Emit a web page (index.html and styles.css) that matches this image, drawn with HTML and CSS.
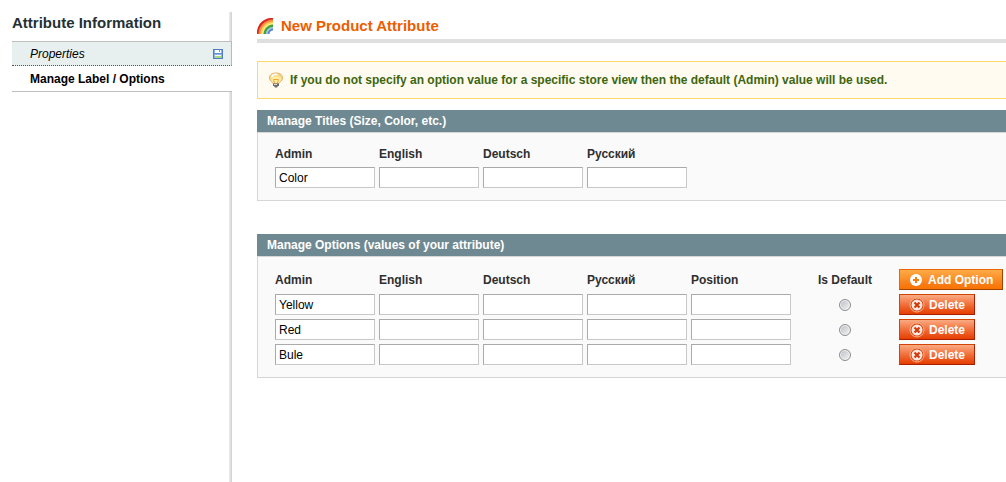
FILE: index.html
```html
<!DOCTYPE html>
<html lang="en">
<head>
<meta charset="utf-8">
<title>New Product Attribute</title>
<link rel="stylesheet" href="styles.css">
</head>
<body>
<div class="page">
  <aside class="sidebar">
    <h3 class="sidebar-title">Attribute Information</h3>
    <nav class="tabs">
      <a class="tab tab-changed" href="#properties">
        <span>Properties</span>
        <svg class="disk" viewBox="0 0 10 10" width="10" height="10" aria-hidden="true">
          <rect x="0.5" y="0.5" width="9" height="9" fill="#8fb4ec" stroke="#4f7cc8"/>
          <rect x="2" y="1" width="6" height="3" fill="#fff"/>
          <rect x="6" y="1" width="1" height="2" fill="#6b93d3"/>
          <rect x="1" y="4" width="8" height="1" fill="#5f8dd8"/>
          <rect x="2" y="6" width="6" height="1" fill="#f4faef"/>
          <rect x="2" y="7" width="6" height="2" fill="#a6de78"/>
        </svg>
      </a>
      <a class="tab tab-active" href="#labels">Manage Label / Options</a>
    </nav>
  </aside>

  <main class="content">
    <header class="content-header">
      <svg viewBox="0 0 16 16" width="16" height="16" aria-hidden="true">
        <path d="M0 16V13C1 6 6 1 13 0H16V16Z" fill="#d8271e"/>
        <path d="M1.500 16C1.500 8 8 1.500 16 1.500V16Z" fill="#f58a4a"/>
        <path d="M3.500 16C3.500 9 9 3.500 16 3.500V16Z" fill="#ffcf4a"/>
        <path d="M5 16C5 10 10 5 16 5V16Z" fill="#ffe98a"/>
        <path d="M6.500 16C6.500 11 11 6.500 16 6.500V16Z" fill="#3fa53a"/>
        <path d="M9 16C9 12 12 9 16 9V16Z" fill="#a9caf0"/>
        <path d="M10.500 16C10.500 13 13 10.500 16 10.500V16Z" fill="#5f84c8"/>
        <path d="M12.500 16C12.500 14 14 12.500 16 12.500V16Z" fill="#fff"/>
      </svg>
      <h1>New Product Attribute</h1>
    </header>

    <p class="notice">
      <svg viewBox="0 0 16 16" width="16" height="16" aria-hidden="true">
        <defs>
          <radialGradient id="glow" cx="50%" cy="65%" r="60%">
            <stop offset="0" stop-color="#fff3a0"/>
            <stop offset="0.550" stop-color="#ffe9a2"/>
            <stop offset="1" stop-color="#f9c86c"/>
          </radialGradient>
        </defs>
        <path d="M8 1C3.500 1 1.500 3.500 1.500 6C1.500 9 4.500 9.500 5 11.500H11C11.500 9.500 14.500 9 14.500 6C14.500 3.500 12.500 1 8 1Z" fill="url(#glow)" stroke="#e3b06a"/>
        <path d="M3.500 5C4.500 2.500 7 2 9.500 2.500" fill="none" stroke="#fff" stroke-width="1.500"/>
        <path d="M6.500 11L5.500 7.500H10.500L9.500 11" fill="none" stroke="#eda93c"/>
        <path d="M5 11.500H11V14H10L9 15.500H7L6 14H5Z" fill="#6c6c6c"/>
        <path d="M6 12.500H9" stroke="#ddd"/>
      </svg>
      <span>If you do not specify an option value for a specific store view then the default (Admin) value will be used.</span>
    </p>

    <section class="box">
      <h2 class="box-head">Manage Titles (Size, Color, etc.)</h2>
      <div class="box-body">
        <table class="grid titles">
          <thead>
            <tr><th id="t1">Admin</th><th id="t2">English</th><th id="t3">Deutsch</th><th id="t4">Русский</th></tr>
          </thead>
          <tbody>
            <tr>
              <td><input type="text" aria-labelledby="t1" value="Color"></td>
              <td><input type="text" aria-labelledby="t2"></td>
              <td><input type="text" aria-labelledby="t3"></td>
              <td><input type="text" aria-labelledby="t4"></td>
            </tr>
          </tbody>
        </table>
      </div>
    </section>

    <section class="box">
      <h2 class="box-head">Manage Options (values of your attribute)</h2>
      <div class="box-body">
        <table class="grid options">
          <thead>
            <tr>
              <th id="o1">Admin</th><th id="o2">English</th><th id="o3">Deutsch</th><th id="o4">Русский</th><th id="o5">Position</th>
              <th id="o6" class="default">Is Default</th>
              <th>
                <button type="button" class="btn btn-add">
                  <svg viewBox="0 0 16 16" width="16" height="16" aria-hidden="true">
                    <circle cx="8" cy="8" r="6" fill="#fff"/>
                    <path d="M8 5V11M5 8H11" stroke="#f07c16" stroke-width="2"/>
                  </svg>
                  <span>Add Option</span>
                </button>
              </th>
            </tr>
          </thead>
          <tbody>
            <tr>
              <td><input type="text" aria-labelledby="o1" value="Yellow"></td>
              <td><input type="text" aria-labelledby="o2"></td>
              <td><input type="text" aria-labelledby="o3"></td>
              <td><input type="text" aria-labelledby="o4"></td>
              <td><input type="text" aria-labelledby="o5"></td>
              <td class="default"><input type="radio" name="default" aria-labelledby="o6"></td>
              <td>
                <button type="button" class="btn btn-delete">
                  <svg viewBox="0 0 16 16" width="16" height="16" aria-hidden="true">
                    <circle cx="8" cy="8" r="7" fill="#d8420c" stroke="#fbb48f"/>
                    <circle cx="8" cy="8" r="5.500" fill="#fde9e2"/>
                    <path d="M5.500 5.500L10.500 10.500M10.500 5.500L5.500 10.500" stroke="#cf3a08" stroke-width="2.200"/>
                  </svg>
                  <span>Delete</span>
                </button>
              </td>
            </tr>
            <tr>
              <td><input type="text" aria-labelledby="o1" value="Red"></td>
              <td><input type="text" aria-labelledby="o2"></td>
              <td><input type="text" aria-labelledby="o3"></td>
              <td><input type="text" aria-labelledby="o4"></td>
              <td><input type="text" aria-labelledby="o5"></td>
              <td class="default"><input type="radio" name="default" aria-labelledby="o6"></td>
              <td>
                <button type="button" class="btn btn-delete">
                  <svg viewBox="0 0 16 16" width="16" height="16" aria-hidden="true">
                    <circle cx="8" cy="8" r="7" fill="#d8420c" stroke="#fbb48f"/>
                    <circle cx="8" cy="8" r="5.500" fill="#fde9e2"/>
                    <path d="M5.500 5.500L10.500 10.500M10.500 5.500L5.500 10.500" stroke="#cf3a08" stroke-width="2.200"/>
                  </svg>
                  <span>Delete</span>
                </button>
              </td>
            </tr>
            <tr>
              <td><input type="text" aria-labelledby="o1" value="Bule"></td>
              <td><input type="text" aria-labelledby="o2"></td>
              <td><input type="text" aria-labelledby="o3"></td>
              <td><input type="text" aria-labelledby="o4"></td>
              <td><input type="text" aria-labelledby="o5"></td>
              <td class="default"><input type="radio" name="default" aria-labelledby="o6"></td>
              <td>
                <button type="button" class="btn btn-delete">
                  <svg viewBox="0 0 16 16" width="16" height="16" aria-hidden="true">
                    <circle cx="8" cy="8" r="7" fill="#d8420c" stroke="#fbb48f"/>
                    <circle cx="8" cy="8" r="5.500" fill="#fde9e2"/>
                    <path d="M5.500 5.500L10.500 10.500M10.500 5.500L5.500 10.500" stroke="#cf3a08" stroke-width="2.200"/>
                  </svg>
                  <span>Delete</span>
                </button>
              </td>
            </tr>
          </tbody>
        </table>
      </div>
    </section>
  </main>
</div>
</body>
</html>
```
FILE: styles.css
```css
* {
  box-sizing: border-box;
}

body {
  margin: 0;
  background: #fff;
  color: #2f2f2f;
  font: 12px/16px "Liberation Sans", Arial, sans-serif;
}

h1, h2, h3, p {
  margin: 0;
}

svg {
  display: block;
  flex: none;
}

.page {
  display: flex;
  min-height: 100vh;
  padding: 12px 0 0 12px;
}

/* Left column */
.sidebar {
  flex: 0 0 220px;
  background: linear-gradient(to right, #eee, #d0d0d0) right / 3px 100% no-repeat;
}

.sidebar-title {
  padding: 2px 0 9px;
  color: #253033;
  font-size: 15px;
  line-height: 18px;
}

.tabs {
  border-top: 1px solid #bebebe;
  border-bottom: 1px solid #bebebe;
}

.tab {
  display: flex;
  align-items: center;
  justify-content: space-between;
  padding: 4px 8px 4px 18px;
  color: #000;
  text-decoration: none;
}

.tab-changed {
  padding-bottom: 3px;
  border-right: 1px solid #a9c0bd;
  border-bottom: 1px dotted #555;
  background: #e7efef;
  font-style: italic;
}

.tab-active {
  padding-top: 5px;
  background: #fff;
  font-weight: bold;
}

/* Right column */
.content {
  flex: 1;
  min-width: 0;
  padding-left: 25px;
}

.content-header {
  display: flex;
  align-items: center;
  gap: 8px;
  margin-bottom: 18px;
  padding: 4px 0 3px;
  border-bottom: 4px solid #dfdfdf;
}

.content-header h1 {
  color: #eb5e00;
  font-size: 15px;
  line-height: 20px;
}

.notice {
  display: flex;
  align-items: center;
  gap: 6px;
  margin-bottom: 11px;
  padding: 10px;
  border: 1px solid #ffd967;
  border-right: 0;
  background: #fffbf0;
  color: #3d6611;
  font-weight: bold;
}

.box {
  margin-bottom: 33px;
}

.box-head {
  padding: 3px 10px;
  background: #6f8992;
  color: #fff;
  font-size: 12px;
  line-height: 16px;
}

.box-body {
  padding: 10px 0 10px 15px;
  border: 1px solid #d6d6d6;
  border-right: 0;
  background: #fafafa;
}

.grid {
  border-collapse: collapse;
}

.grid th,
.grid td {
  min-width: 104px;
  padding: 2px;
  text-align: left;
  white-space: nowrap;
}

.titles th {
  height: 22px;
}

.options th {
  height: 25px;
}

.grid input[type="text"] {
  display: block;
  width: 100px;
  height: 21px;
  padding: 0 3px;
  border: 1px solid;
  border-color: #aaa #c8c8c8 #c8c8c8 #aaa;
  background: #fff;
  color: #000;
  font: inherit;
}

.grid .default {
  padding: 2px 20px;
  text-align: center;
}

.grid input[type="radio"] {
  display: block;
  appearance: none;
  width: 12px;
  height: 12px;
  margin: 0 auto;
  border: 1px solid #8e8f8f;
  border-radius: 50%;
  background: linear-gradient(135deg, #b8bcc2, #f6f6f6);
  box-shadow: inset 0 0 0 1px #f4f4f4;
}

.btn {
  display: flex;
  align-items: center;
  gap: 4px;
  height: 21px;
  padding: 0 9px;
  border: 1px solid;
  color: #fff;
  font: bold 12px/16px "Liberation Sans", Arial, sans-serif;
}

.btn-add {
  padding-left: 8px;
  border-color: #ed6502 #a04300 #a04300 #ed6502;
  background: linear-gradient(#ffac47, #f97c16 75%, #f77400);
}

.btn-delete {
  border-color: #d24403 #a92000 #a92000 #d24403;
  background: linear-gradient(#fbaa82, #f06a35 55%, #e63d00);
}
```
